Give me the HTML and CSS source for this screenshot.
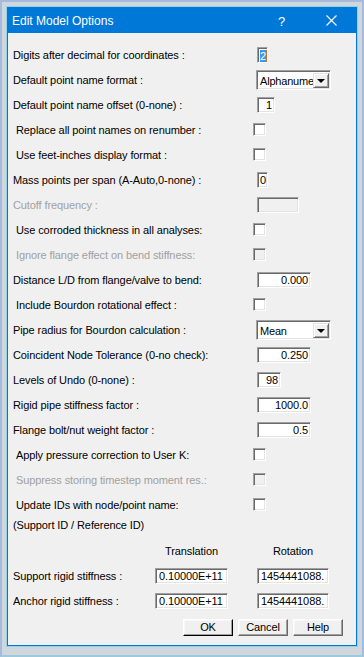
FILE: index.html
```html
<!DOCTYPE html>
<html>
<head>
<meta charset="utf-8">
<link rel="stylesheet" href="styles.css">
</head>
<body>
<div class="screen">
  <div class="dialog">
    <div class="titlebar">
      <span class="title">Edit Model Options</span>
      <span class="help">?</span>
      <span class="close"><svg width="11" height="11" viewBox="0 0 11 11"><path d="M0.5 0.5 L10.5 10.5 M10.5 0.5 L0.5 10.5" stroke="#fff" stroke-width="1.1" fill="none"/></svg></span>
    </div>
    <div class="content">
      <div class="row"><span class="lbl">Digits after decimal for coordinates :</span><span class="edit w11 sel"><span class="hl">2</span></span></div>
      <div class="row"><span class="lbl">Default point name format :</span><span class="combo"><span class="ctext">Alphanume</span><span class="cbtn"><span class="tri"></span></span></span></div>
      <div class="row"><span class="lbl">Default point name offset (0-none) :</span><span class="edit w18 num">1</span></div>
      <div class="row"><span class="lbl chk">Replace all point names on renumber :</span><span class="box"></span></div>
      <div class="row"><span class="lbl chk">Use feet-inches display format :</span><span class="box"></span></div>
      <div class="row"><span class="lbl">Mass points per span (A-Auto,0-none) :</span><span class="edit w11 num">0</span></div>
      <div class="row"><span class="lbl dis">Cutoff frequency :</span><span class="edit w42 off"></span></div>
      <div class="row"><span class="lbl chk">Use corroded thickness in all analyses:</span><span class="box"></span></div>
      <div class="row"><span class="lbl chk dis">Ignore flange effect on bend stiffness:</span><span class="box off"></span></div>
      <div class="row"><span class="lbl">Distance L/D from flange/valve to bend:</span><span class="edit w54 num">0.000</span></div>
      <div class="row"><span class="lbl chk">Include Bourdon rotational effect :</span><span class="box"></span></div>
      <div class="row"><span class="lbl">Pipe radius for Bourdon calculation :</span><span class="combo"><span class="ctext">Mean</span><span class="cbtn"><span class="tri"></span></span></span></div>
      <div class="row"><span class="lbl">Coincident Node Tolerance (0-no check):</span><span class="edit w54 num">0.250</span></div>
      <div class="row"><span class="lbl">Levels of Undo (0-none) :</span><span class="edit w24 num">98</span></div>
      <div class="row"><span class="lbl">Rigid pipe stiffness factor :</span><span class="edit w54 num">1000.0</span></div>
      <div class="row"><span class="lbl">Flange bolt/nut weight factor :</span><span class="edit w54 num">0.5</span></div>
      <div class="row"><span class="lbl chk">Apply pressure correction to User K:</span><span class="box"></span></div>
      <div class="row"><span class="lbl chk dis">Suppress storing timestep moment res.:</span><span class="box off"></span></div>
      <div class="row"><span class="lbl chk">Update IDs with node/point name:</span><span class="box"></span></div>
      <div class="note">(Support ID / Reference ID)</div>
      <div class="srow head"><span class="slbl"></span><span class="hcell t">Translation</span><span class="hcell r">Rotation</span></div>
      <div class="srow"><span class="slbl">Support rigid stiffness :</span><span class="edit st t">0.10000E+11</span><span class="edit st r">1454441088.</span></div>
      <div class="srow"><span class="slbl">Anchor rigid stiffness :</span><span class="edit st t">0.10000E+11</span><span class="edit st r">1454441088.</span></div>
      <div class="buttons"><span class="btn def">OK</span><span class="btn">Cancel</span><span class="btn">Help</span></div>
    </div>
  </div>
</div>
</body>
</html>
```
FILE: styles.css
```css
html, body {
  margin: 0;
  padding: 0;
}
body {
  width: 364px;
  height: 657px;
  overflow: hidden;
}
.screen {
  box-sizing: border-box;
  width: 364px;
  height: 657px;
  background: #cfd6dc;
  border: 2px solid #a3bbdf;
  border-bottom-color: #9dc9dc;
  padding: 5px;
}
.dialog {
  box-sizing: border-box;
  width: 350px;
  height: 639px;
  border: 1px solid #0078d7;
  background: #f0f0f0;
  box-shadow: 0 0 0 1px #93d2e3;
  display: flex;
  flex-direction: column;
}
.titlebar {
  height: 25px;
  background: #0078d7;
  color: #fff;
  display: flex;
  align-items: center;
  font-family: "Liberation Sans", Arial, sans-serif;
  font-size: 12px;
  padding-left: 4px;
}
.title {
  flex: 1;
  padding-top: 1px;
}
.help {
  font-size: 13px;
  width: 12px;
  margin-right: 36px;
  padding-top: 1px;
}
.close {
  width: 11px;
  height: 11px;
  margin-right: 19px;
  display: flex;
}
.content {
  flex: 1;
  display: flex;
  flex-direction: column;
  padding: 9px 13px 0 5px;
  font-family: "Liberation Sans", Arial, sans-serif;
  font-size: 11px;
  letter-spacing: -0.1px;
  color: #000;
}
.row {
  height: 25px;
  display: flex;
  align-items: center;
}
.lbl {
  width: 244px;
  white-space: nowrap;
}
.lbl.chk {
  width: 240px;
  padding-left: 3px;
  margin-right: -1px;
}
.dis {
  color: #a0a0a0;
}
.edit {
  box-sizing: border-box;
  height: 16px;
  background: #fff;
  border: 1px solid;
  border-color: #a0a0a0 #ffffff #ffffff #a0a0a0;
  box-shadow: inset 1px 1px 0 #696969, inset -1px -1px 0 #e3e3e3;
  line-height: 14px;
  padding: 0 2px 0 3px;
  white-space: nowrap;
  overflow: hidden;
}
.edit.num {
  text-align: right;
}
.edit.off {
  background: #f0f0f0;
}
.w11 { width: 11px; padding: 0 1px; }
.w18 { width: 18px; }
.w24 { width: 24px; }
.w42 { width: 42px; }
.w54 { width: 54px; }
.sel {
  display: flex;
  padding: 2px 1px 2px 2px;
}
.hl {
  display: block;
  width: 6px;
  height: 12px;
  background: #3399ff;
  color: #fff;
  line-height: 12px;
  font-size: 11px;
  text-align: center;
  border-right: 1px solid #c0702a;
}
.box {
  box-sizing: border-box;
  width: 13px;
  height: 13px;
  margin-left: -2px;
  background: #fff;
  border: 1px solid;
  border-color: #a0a0a0 #ffffff #ffffff #a0a0a0;
  box-shadow: inset 1px 1px 0 #696969, inset -1px -1px 0 #e3e3e3;
}
.box.off {
  background: #f0f0f0;
}
.combo {
  box-sizing: border-box;
  width: 75px;
  height: 20px;
  margin-left: -1px;
  background: #fff;
  border: 1px solid;
  border-color: #a0a0a0 #ffffff #ffffff #a0a0a0;
  box-shadow: inset 1px 1px 0 #696969, inset -1px -1px 0 #e3e3e3;
  display: flex;
  align-items: stretch;
  padding: 2px 1px 1px 2px;
}
.ctext {
  flex: 1;
  overflow: hidden;
  white-space: nowrap;
  line-height: 16px;
  padding-left: 1px;
  font-size: 11px;
  letter-spacing: -0.2px;
}
.cbtn {
  box-sizing: border-box;
  width: 16px;
  background: #f0f0f0;
  border: 1px solid;
  border-color: #e3e3e3 #696969 #696969 #e3e3e3;
  box-shadow: inset 1px 1px 0 #ffffff, inset -1px -1px 0 #a0a0a0;
  display: flex;
  align-items: center;
  justify-content: center;
}
.tri {
  width: 0;
  height: 0;
  border-left: 4px solid transparent;
  border-right: 4px solid transparent;
  border-top: 4px solid #000;
  margin-top: 1px;
}
.note {
  height: 17px;
  line-height: 17px;
  margin-bottom: 4px;
}
.srow {
  height: 25px;
  display: flex;
  align-items: center;
}
.slbl {
  width: 142px;
  white-space: nowrap;
}
.hcell {
  text-align: center;
}
.t {
  width: 73px;
  margin-right: 29px;
}
.r {
  width: 72px;
}
.edit.st {
  padding-left: 3px;
  padding-right: 0;
  text-overflow: clip;
}
.buttons {
  display: flex;
  justify-content: flex-end;
  gap: 5px;
  margin-top: 6px;
}
.btn {
  box-sizing: border-box;
  width: 50px;
  height: 17px;
  background: #f0f0f0;
  border: 1px solid;
  border-color: #ffffff #696969 #696969 #ffffff;
  box-shadow: inset -1px -1px 0 #a0a0a0, inset 1px 1px 0 #f8f8f8;
  text-align: center;
  line-height: 15px;
}
.btn.def {
  border-color: #ffffff #000000 #000000 #ffffff;
}
```
